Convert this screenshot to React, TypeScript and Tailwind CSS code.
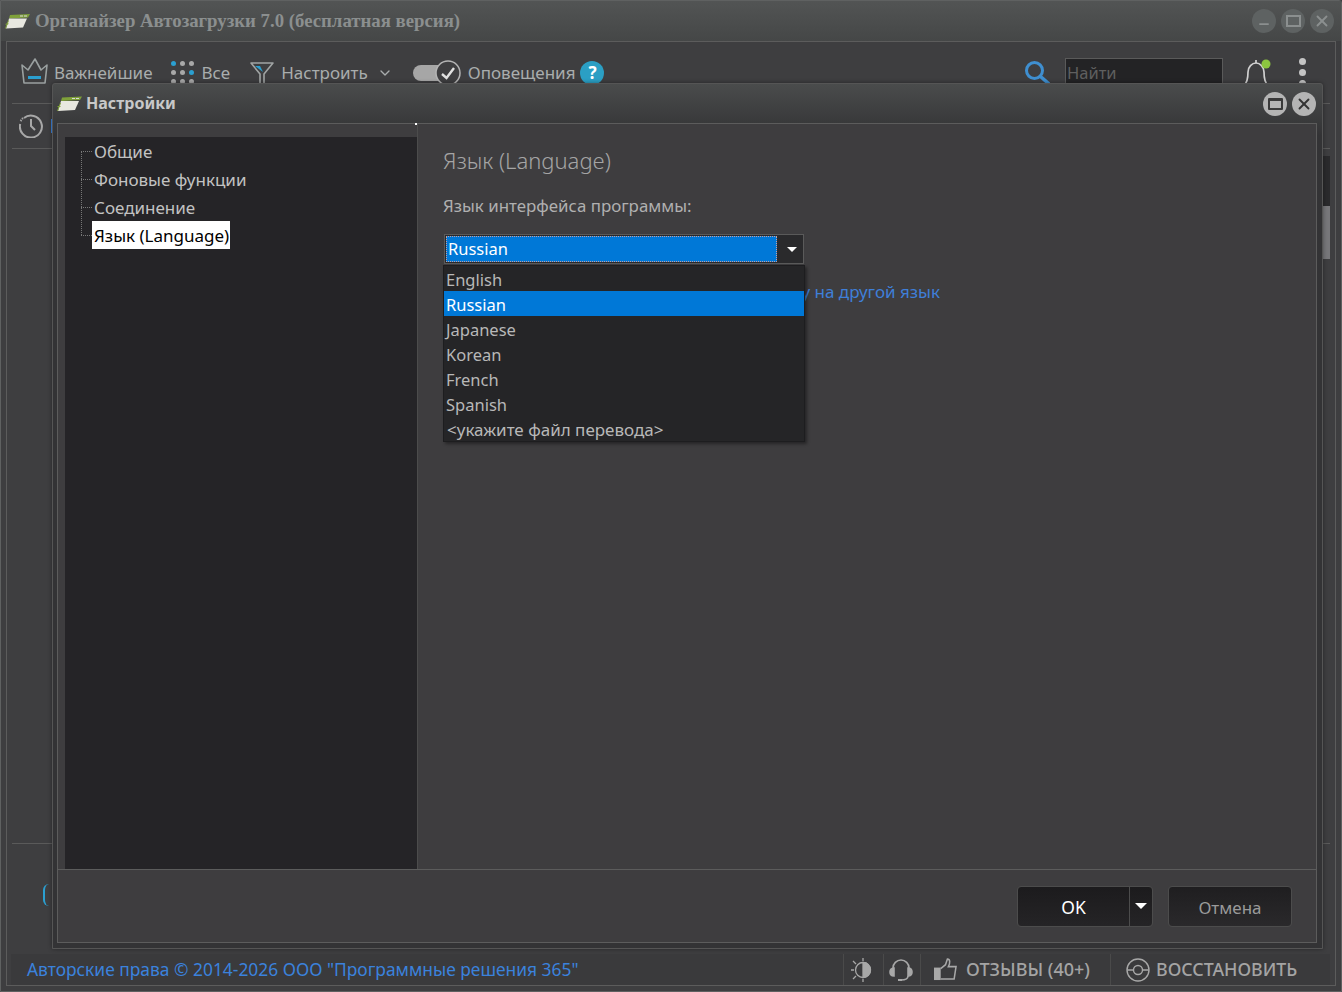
import type { FC, ReactNode } from 'react';
import { X, Minus, ChevronDown } from 'lucide-react';

const Logo: FC<{ className?: string }> = ({ className }) => (
  <svg viewBox="0 0 25 16" className={className}>
    <path d="M5 1.5 L25 0.5 L23 4 L4 5 Z" fill="#7fa13a" />
    <path d="M15 2 h3 v1 h-3z M19 2 h3 v1 h-3z" fill="#d9d9d9" />
    <path d="M4 5 L22 5 L18 14 L1 15 Z" fill="#e8e8e0" />
    <path d="M3 7 L0 15 L1 15 L4 7Z" fill="#7fa13a" />
    <path d="M1 10 h3 l-1 1 h-3z" fill="#7fa13a" />
  </svg>
);

const Crown = () => (
  <svg viewBox="0 0 27 27" className="w-[27px] h-[27px] -mt-[2px]" fill="none">
    <path d="M1 7 L7 12 L14 1 L20 12 L26 7 L24 25 H3 Z" stroke="#9aa0a0" strokeWidth="1.6" strokeLinejoin="round" />
    <rect x="7" y="18" width="13" height="3" fill="#2b9fd0" />
  </svg>
);

const Dots = () => {
  const cells = ['#2b9fd0', '#a8a8a8', '#a8a8a8', '#a8a8a8', '#a8a8a8', '#2b9fd0', '#a8a8a8', '#a8a8a8', '#a8a8a8'];
  return (
    <div className="grid grid-cols-3 gap-x-[4px] gap-y-[4px] w-[24px]">
      {cells.map((c, i) => (
        <svg key={i} viewBox="0 0 5 5" className="w-[5px] h-[5px]">
          <circle cx="2.5" cy="2.5" r="2.5" fill={c} />
        </svg>
      ))}
    </div>
  );
};

const Filter = () => (
  <svg viewBox="0 0 24 24" className="w-[24px] h-[24px]" fill="none">
    <path d="M1 2 H23 L14 13 V23 H10 V13 Z" stroke="#a0a4a4" strokeWidth="1.6" strokeLinejoin="round" />
    <path d="M5 5 L10 5 L13 11 Z" fill="#2b9fd0" />
  </svg>
);

const Toggle = () => (
  <div className="relative w-[48px] h-[26px] flex items-center">
    <div className="w-[34px] h-[16px] rounded-full bg-[#a6a6a6]" />
    <svg viewBox="0 0 26 26" className="absolute right-0 top-0 w-[26px] h-[26px]" fill="none">
      <circle cx="13" cy="13" r="12" fill="#3e3e40" stroke="#b5b5b5" strokeWidth="1.5" />
      <path d="M7 14 L11.5 18 L19 8" stroke="#e0e0e0" strokeWidth="2.4" />
    </svg>
  </div>
);

const Search = () => (
  <svg viewBox="0 0 26 26" className="w-[26px] h-[26px]" fill="none">
    <circle cx="10.5" cy="10.5" r="8" stroke="#3f8fd0" strokeWidth="3" />
    <path d="M16.5 16.5 L25 24" stroke="#3f8fd0" strokeWidth="3.5" />
  </svg>
);

const Bell = () => (
  <svg viewBox="0 0 28 28" className="w-[28px] h-[28px] -mt-[2px]" fill="none">
    <path d="M1 27 C4 25 5 21 5 14 C5 9 9 5 13 5 C17 5 21 9 21 14 C21 21 22 25 25 27 Z" stroke="#d0d0d0" strokeWidth="1.7" />
    <path d="M13 2 V5" stroke="#d0d0d0" strokeWidth="1.7" />
    <circle cx="23" cy="6" r="4.5" fill="#8cc63f" />
  </svg>
);

const Clock = () => (
  <svg viewBox="0 0 24 24" className="w-[24px] h-[24px]" fill="none" stroke="#a8a8a8" strokeWidth="2">
    <path d="M5 4 A11 11 0 1 1 1.2 10" />
    <path d="M1.5 7 L2.5 6 M3 5 L4 4" />
    <path d="M12 5 V12 L16 16" />
  </svg>
);

const Contrast = () => (
  <svg viewBox="0 0 24 24" className="w-[24px] h-[24px]" fill="none" stroke="#a8a8a8" strokeWidth="1.3">
    <circle cx="12" cy="12" r="7.5" />
    <path d="M12 4.5 A7.5 7.5 0 0 1 12 19.5 Z" fill="#a8a8a8" />
    <path d="M12 0 V3 M12 21 V24 M0 12 H3 M2 3 L5 6 M2 21 L5 18" />
  </svg>
);

const Headset = () => (
  <svg viewBox="0 0 24 24" className="w-[24px] h-[24px]" fill="none" stroke="#a8a8a8" strokeWidth="1.6">
    <path d="M4 12 V10 A8 8 0 0 1 20 10 V12" />
    <path d="M5 10 C2 10 1 12 1 14 C1 16 2 18 5 18 Z" fill="#a8a8a8" />
    <path d="M19 10 C22 10 23 12 23 14 C23 16 22 18 19 18 Z" fill="#a8a8a8" />
    <path d="M19 18 C19 21 16 22 12 22" />
    <rect x="9" y="21" width="4" height="2" fill="#a8a8a8" stroke="none" />
  </svg>
);

const Thumb = () => (
  <svg viewBox="0 0 24 24" className="w-[23px] h-[23px]" fill="none">
    <rect x="0" y="10" width="7" height="13" fill="#a8a8a8" />
    <path d="M7 11 L12 7 L14 1 C17 1 17 5 15 9 H23 L21 22 H7" stroke="#a8a8a8" strokeWidth="1.6" />
  </svg>
);

const Restore = () => (
  <svg viewBox="0 0 24 24" className="w-[24px] h-[24px]" fill="none" stroke="#a8a8a8" strokeWidth="1.4">
    <circle cx="12" cy="12" r="11" />
    <circle cx="12" cy="12" r="4.5" />
    <path d="M1 12 H7.5 M16.5 12 H23" />
  </svg>
);

const WinButton: FC<{ light?: boolean; children: ReactNode }> = ({ light, children }) => (
  <div
    className={
      light
        ? 'w-[24px] h-[24px] rounded-full bg-[#b4b4b4] flex items-center justify-center text-[#333]'
        : 'w-[24px] h-[24px] rounded-full bg-[#5e6262] flex items-center justify-center text-[#8b8f8f]'
    }
  >
    {children}
  </div>
);

const languages = ['English', 'Russian', 'Japanese', 'Korean', 'French', 'Spanish'];
const treeItems = ['Общие', 'Фоновые функции', 'Соединение'];

const Toolbar = () => (
  <div className="h-[62px] shrink-0 flex items-center pl-[9px] pr-[23px] border-b border-[#5a5a5a] text-[#a9adad] text-[17px]">
    <Crown />
    <span className="ml-[6px] pt-[1px]">Важнейшие</span>
    <div className="ml-[18px]"><Dots /></div>
    <span className="ml-[7px] pt-[1px]">Все</span>
    <div className="ml-[20px]"><Filter /></div>
    <span className="ml-[7px] pt-[1px]">Настроить</span>
    <ChevronDown size={16} className="ml-[9px]" />
    <div className="ml-[20px]"><Toggle /></div>
    <span className="ml-[7px] pt-[1px]">Оповещения</span>
    <div className="ml-[5px] w-[24px] h-[24px] rounded-full bg-[#2b9fc4] flex items-center justify-center text-white font-bold text-[17px]">?</div>
    <div className="ml-auto"><Search /></div>
    <div className="ml-[15px] w-[158px] h-[28px] -mt-[2px] bg-[#232325] border border-[#5a5a5a] text-[#5f5f5f] text-[16.5px] leading-[28px] pl-[1px]">Найти</div>
    <div className="ml-[20px]"><Bell /></div>
    <div className="ml-[28px] flex flex-col gap-[4px] w-[8px]">
      <div className="w-[7px] h-[7px] rounded-full bg-[#c4c4c4]" />
      <div className="w-[7px] h-[7px] rounded-full bg-[#c4c4c4]" />
      <div className="w-[7px] h-[7px] rounded-full bg-[#c4c4c4]" />
    </div>
  </div>
);

const StatusBar = () => (
  <div className="h-[31px] shrink-0 ml-[4px] mr-[5px] flex items-stretch bg-[#3a3a3c] text-[#a4a4a4]">
    <div className="flex-1 pl-[16px] flex items-center text-[#3b82dc] text-[17.4px]">
      Авторские права © 2014-2026 ООО "Программные решения 365"
    </div>
    <div className="w-[40px] border-l border-[#4a4a4a] flex items-center justify-center pr-[1px]"><Contrast /></div>
    <div className="w-[37px] border-l border-[#4a4a4a] flex items-center justify-center pr-[3px]"><Headset /></div>
    <div className="w-[190px] border-l border-[#4a4a4a] flex items-center pl-[13px] gap-[9px] text-[18px] font-medium">
      <Thumb />
      <span>ОТЗЫВЫ (40+)</span>
    </div>
    <div className="w-[220px] border-l border-[#4a4a4a] flex items-center pl-[15px] gap-[6px] text-[17.8px] font-medium">
      <Restore />
      <span>ВОССТАНОВИТЬ</span>
    </div>
  </div>
);

const MainWindow = () => (
  <div className="h-full flex flex-col border border-[#5f6161] rounded-tr-[3px]">
    <div className="h-[40px] shrink-0 flex items-center pl-[4px] pr-[7px] bg-gradient-to-b from-[#525454] to-[#454747]">
      <Logo className="w-[25px] h-[17px]" />
      <span className="ml-[5px] font-['Liberation_Serif',serif] font-bold text-[18.8px] text-[#8b8f8f]">
        Органайзер Автозагрузки 7.0 (бесплатная версия)
      </span>
      <div className="ml-auto flex gap-[5px]">
        <WinButton><Minus size={14} strokeWidth={3} className="mt-[6px]" /></WinButton>
        <WinButton><div className="w-[15px] h-[12px] border-[2px] border-[#8b8f8f]" /></WinButton>
        <WinButton><X size={18} strokeWidth={2.5} /></WinButton>
      </div>
    </div>
    <div className="flex-1 mx-[5px] mb-[5px] flex flex-col border border-[#5c5c5c] min-h-0">
      <div className="flex-1 flex flex-col px-[5px] min-h-0">
        <Toolbar />
        <div className="h-[45px] shrink-0 flex items-center pl-[7px] border-b border-[#5a5a5a]">
          <Clock />
          <div className="w-[1px] h-[14px] bg-[#3b82dc] ml-[8px]" />
        </div>
        <div className="flex-1 flex justify-end pt-[7px]">
          <div className="w-[7px] h-[103px] bg-[#2a2a2c] flex flex-col justify-end">
            <div className="h-[53px] bg-[#77777a]" />
          </div>
        </div>
        <div className="h-[111px] shrink-0 border-t border-[#5a5a5a] pl-[31px] pt-[40px]">
          <div className="w-[12px] h-[22px] rounded-full border-l-[2px] border-[#2b9fd0]" />
        </div>
      </div>
      <StatusBar />
    </div>
  </div>
);

const SettingsDialog = () => (
  <div className="absolute left-[52px] top-[83px] w-[1271px] h-[866px] flex flex-col border border-[#555] rounded-t-[3px] bg-gradient-to-b from-[#4a4c4c] to-[#333335] to-[6%] shadow-[0_0_4px_rgba(0,0,0,0.4)]">
    <div className="h-[39px] shrink-0 flex items-center pl-[4px] pr-[6px]">
      <Logo className="w-[25px] h-[16px]" />
      <span className="ml-[4px] mb-[2px] font-bold text-[16px] text-[#c8c8c8]">Настройки</span>
      <div className="ml-auto flex gap-[5px]">
        <WinButton light><div className="w-[15px] h-[12px] border-[2px] border-t-[3px] border-[#3a3a3a] rounded-[1px]" /></WinButton>
        <WinButton light><X size={18} strokeWidth={2.5} /></WinButton>
      </div>
    </div>
    <div className="flex-1 ml-[4px] mr-[5px] mb-[5px] flex flex-col border border-[#5c5c5c] bg-[#3e3d3f] min-h-0">
      <div className="flex-1 flex min-h-0 border-b border-[#5c5c5c]">
        <div className="relative w-[359px] shrink-0 pl-[7px] pt-[13px]">
          <div className="absolute right-0 -top-[1px] w-[2px] h-[2px] bg-white" />
          <div className="h-full bg-[#252427] pl-[16px] text-[17px] text-[#c2c2c2]">
            <div className="relative">
              <div className="absolute left-0 top-[14px] bottom-[14px] border-l border-dotted border-[#777]" />
              {treeItems.map(item => (
                <div key={item} className="h-[28px] flex items-center pl-[13px] pt-[2px] relative">
                  <div className="absolute left-0 top-[14px] w-[11px] border-t border-dotted border-[#777]" />
                  {item}
                </div>
              ))}
              <div className="h-[28px] flex items-center relative">
                <div className="absolute left-0 top-[14px] w-[11px] border-t border-dotted border-[#777]" />
                <span className="ml-[11px] bg-white text-black pl-[2px] pr-[1px] h-[28px] leading-[30px]">Язык (Language)</span>
              </div>
            </div>
          </div>
        </div>
        <div className="relative flex-1 pl-[25px] border-l border-[#4c4c4c]">
          <div className="mt-[19px] text-[22px] font-light text-[#a5a5a5] leading-[34px]">Язык (Language)</div>
          <div className="mt-[17px] text-[16.9px] text-[#b0b0b0] leading-[24px]">Язык интерфейса программы:</div>
          <div className="mt-[16px] ml-[1px] w-[360px] h-[30px] flex border border-[#5a5a5a] bg-[#2a2a2c]">
            <div className="flex-1 m-[1px] bg-[#0078d7] border border-dotted border-[#c9a0a0] text-white text-[16.5px] leading-[24px] pl-[1px]">Russian</div>
            <div className="w-[25px] flex items-center justify-center pl-[2px]">
              <div className="w-0 h-0 border-x-[5px] border-x-transparent border-t-[5px] border-t-white" />
            </div>
          </div>
          <div className="mt-[15px] w-[497px] h-[26px] overflow-hidden flex justify-end whitespace-nowrap text-[17px] text-[#3f7fd8] leading-[26px]">
            Перевести программу на другой язык
          </div>
          <div className="absolute left-[25px] top-[141px] w-[362px] h-[177px] bg-[#252527] border border-[#1d1d1f] shadow-[2px_2px_3px_rgba(0,0,0,0.4)] text-[16.5px] text-[#b8b8b8]">
            {languages.map(lang => (
              <div
                key={lang}
                className={lang === 'Russian' ? 'h-[25px] leading-[28px] pl-[2px] bg-[#0078d7] text-white' : 'h-[25px] leading-[28px] pl-[2px]'}
              >
                {lang}
              </div>
            ))}
            <div className="h-[25px] leading-[28px] pl-[3px] text-[17px]">{'<укажите файл перевода>'}</div>
          </div>
        </div>
      </div>
      <div className="h-[72px] shrink-0 flex items-center justify-end gap-[15px] pr-[24px]">
        <div className="w-[136px] h-[41px] flex rounded-[4px] border border-[#4c4c4c] bg-gradient-to-b from-[#1c1b1d] to-[#252426] text-white text-[17.5px]">
          <div className="flex-1 flex items-center justify-center pt-[2px]">OK</div>
          <div className="w-[23px] border-l border-[#4c4c4c] flex items-center justify-center">
            <div className="w-0 h-0 border-x-[6px] border-x-transparent border-t-[6px] border-t-white" />
          </div>
        </div>
        <div className="w-[124px] h-[41px] flex items-center justify-center pt-[3px] rounded-[4px] border border-[#4c4c4c] bg-gradient-to-b from-[#1f1e20] to-[#2a292b] text-[#9a9a9a] text-[17px]">Отмена</div>
      </div>
    </div>
  </div>
);

export default function App() {
  return (
    <div className="relative w-[1342px] h-[992px] overflow-hidden bg-[#3e3e40] font-['Noto_Sans',sans-serif]">
      <MainWindow />
      <SettingsDialog />
    </div>
  );
}
